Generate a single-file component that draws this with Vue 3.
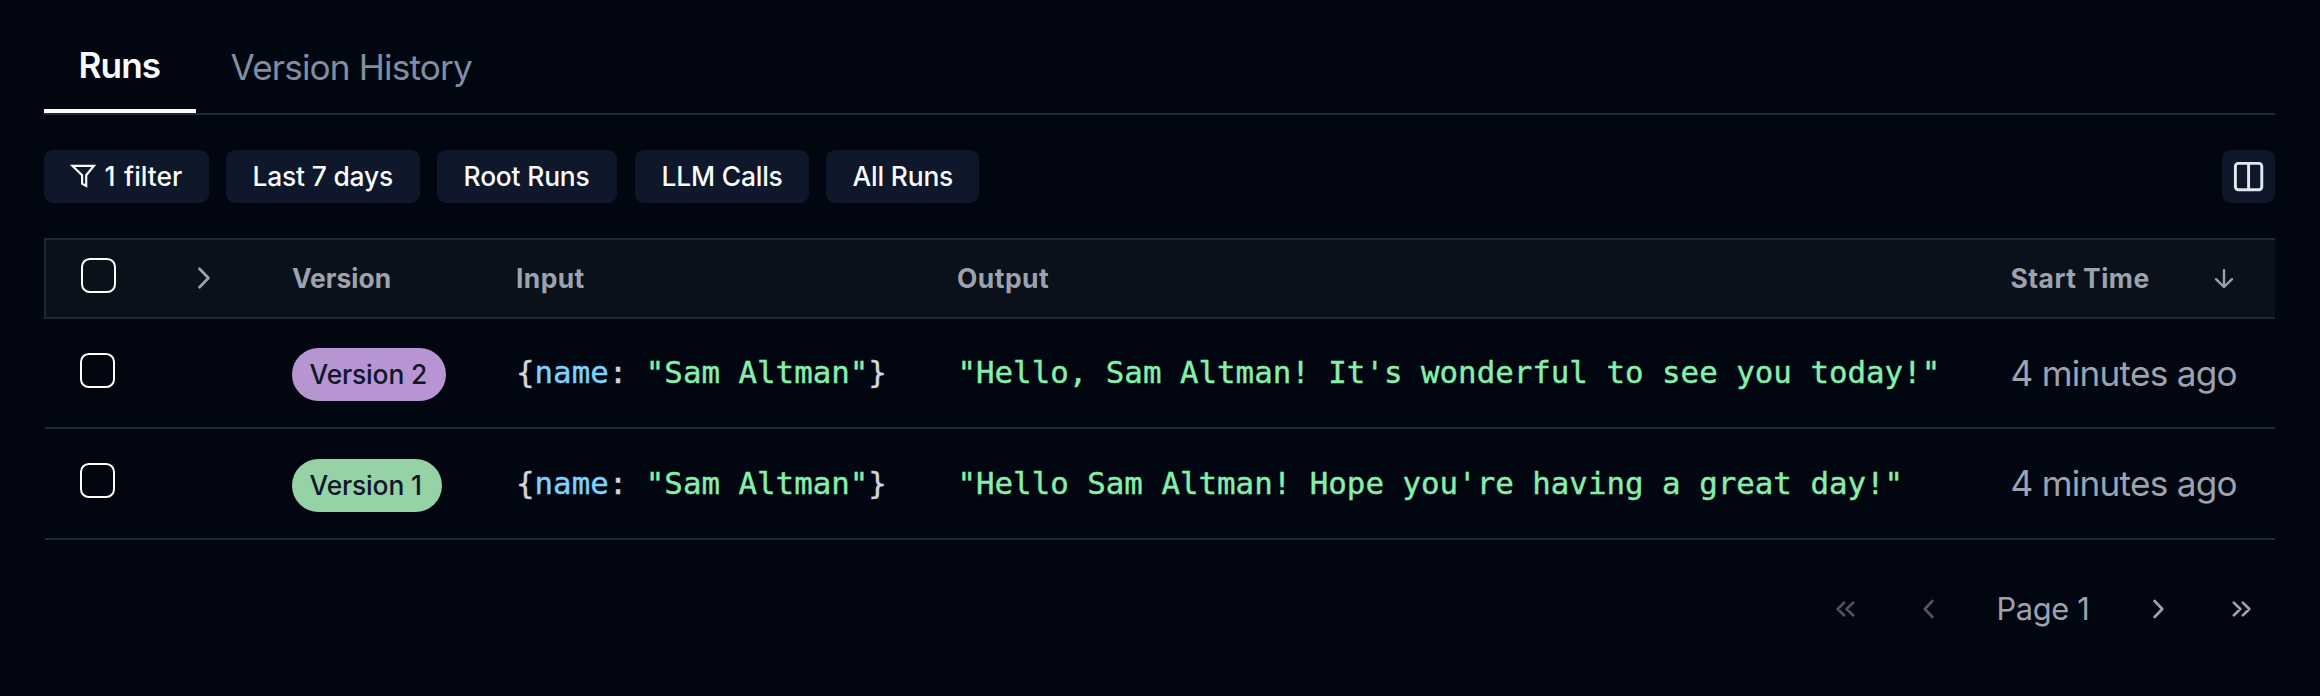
<script setup>
const tabs = [
  { label: 'Runs', active: true },
  { label: 'Version History', active: false },
]

const filters = [
  { label: '1 filter', cls: 'f-count', icon: true },
  { label: 'Last 7 days', cls: 'f-range' },
  { label: 'Root Runs', cls: 'f-root' },
  { label: 'LLM Calls', cls: 'f-llm' },
  { label: 'All Runs', cls: 'f-all' },
]

const runs = [
  {
    version: 'Version 2',
    tone: 'purple',
    name: '"Sam Altman"',
    output: '"Hello, Sam Altman! It\'s wonderful to see you today!"',
    time: '4 minutes ago',
  },
  {
    version: 'Version 1',
    tone: 'green',
    name: '"Sam Altman"',
    output: '"Hello Sam Altman! Hope you\'re having a great day!"',
    time: '4 minutes ago',
  },
]
</script>

<template>
  <main class="page">
    <nav class="tabs">
      <a v-for="t in tabs" :key="t.label" class="tab" :class="{ active: t.active }">{{ t.label }}</a>
    </nav>

    <div class="toolbar">
      <button v-for="f in filters" :key="f.label" class="chip" :class="f.cls">
        <svg v-if="f.icon" class="funnel" viewBox="0 0 26 26" width="26" height="26">
          <path d="M2.3 2.8H24L16.2 12.2V22.9L12.1 20.6V12.2Z" />
        </svg>
        <span>{{ f.label }}</span>
      </button>
      <button class="chip columns" aria-label="Columns">
        <svg viewBox="0 0 24 24" width="35.2" height="35.2">
          <rect x="3" y="3" width="18" height="18" rx="2" />
          <path d="M12 3v18" />
        </svg>
      </button>
    </div>

    <section class="table">
      <div class="row head">
        <div class="check"><span class="box"></span></div>
        <div class="expand">
          <svg viewBox="0 0 14 24" width="14" height="24"><path d="M2.5 2.7L11.4 12L2.5 21.3" /></svg>
        </div>
        <div class="h-version">Version</div>
        <div class="h-input">Input</div>
        <div class="h-output">Output</div>
        <div class="start">
          <span>Start Time</span>
          <svg viewBox="0 0 20 20" width="20" height="20"><path d="M10 1.3V18M2 10.2L10 18L18 10.2" /></svg>
        </div>
      </div>
      <div v-for="r in runs" :key="r.version" class="row body">
        <div class="check"><span class="box"></span></div>
        <div></div>
        <div><span class="badge" :class="r.tone">{{ r.version }}</span></div>
        <div class="code">{<span class="key">name</span>: <span class="str">{{ r.name }}</span>}</div>
        <div class="code str output">{{ r.output }}</div>
        <div class="time">{{ r.time }}</div>
      </div>
    </section>

    <footer class="pager">
      <svg class="dim first" viewBox="0 0 22 20" width="22" height="20">
        <path d="M10.2 3.6L3.7 10L10.2 16.4M19.2 3.6L12.7 10L19.2 16.4" />
      </svg>
      <svg class="dim prev" viewBox="0 0 14 20" width="14" height="20"><path d="M10.4 2L2.8 10L10.4 18" /></svg>
      <span class="pagenum">Page 1</span>
      <svg class="next" viewBox="0 0 14 20" width="14" height="20"><path d="M2.6 2L10.3 10L2.6 18" /></svg>
      <svg class="last" viewBox="0 0 22 20" width="22" height="20">
        <path d="M2.8 3.6L9.3 10L2.8 16.4M11.8 3.6L18.3 10L11.8 16.4" />
      </svg>
    </footer>
  </main>
</template>

<style>
body {
  background: #020610;
}
</style>

<style scoped>
.page {
  box-sizing: border-box;
  width: 2320px;
  height: 696px;
  padding: 19px 45px 0 44px;
  overflow: hidden;
  background: #020610;
  font-family: Inter, sans-serif;
  color: #9ca3af;
}

svg {
  display: block;
  flex: none;
  fill: none;
  stroke: currentColor;
  stroke-width: 2.7;
  stroke-linecap: round;
  stroke-linejoin: round;
}

.tabs {
  display: flex;
  height: 94px;
  border-bottom: 2px solid #1f2937;
}

.tab {
  box-sizing: border-box;
  height: 94px;
  padding: 1px 35px 0;
  line-height: 94px;
  font-size: 35.2px;
  font-weight: 430;
  letter-spacing: -0.86px;
  color: #7f8ea3;
  white-space: nowrap;
}

.tab.active {
  width: 152px;
  padding: 0 0 0 34.5px;
  margin-right: -0.5px;
  border-bottom: 4px solid #fff;
  line-height: 92px;
  font-weight: 600;
  letter-spacing: -0.9px;
  color: #f8fafc;
}

.toolbar {
  display: flex;
  height: 53px;
  margin-top: 35px;
}

.chip {
  box-sizing: border-box;
  display: flex;
  align-items: center;
  height: 53px;
  margin: 0 17px 0 0;
  padding: 0 0 1px 26.6px;
  border: 0;
  border-radius: 9px;
  background: #0f172a;
  color: #f8fafc;
  font: 500 26.4px Inter, sans-serif;
  letter-spacing: -0.2px;
  white-space: nowrap;
}

.f-count {
  width: 165px;
  padding-left: 26px;
  word-spacing: 1.5px;
  letter-spacing: 0;
}

.f-range {
  width: 194px;
}

.f-root {
  width: 180px;
  margin-right: 18px;
}

.f-llm {
  width: 174px;
}

.f-all {
  width: 153px;
}

.funnel {
  margin-right: 8.6px;
  stroke-width: 2.2;
  stroke-linejoin: miter;
}

.columns {
  width: 53px;
  margin: 0 0 0 auto;
  padding: 0 0 0 9px;
  color: #e2e8f0;
}

.columns svg {
  stroke-width: 2;
}

.table {
  margin-top: 35px;
}

.row {
  box-sizing: border-box;
  display: grid;
  align-items: center;
  white-space: nowrap;
}

.head {
  height: 81px;
  border: 2px solid #1f2937;
  border-right: 0;
  background: #0b111b;
  font-size: 26.4px;
  font-weight: 700;
  grid-template-columns: 151px 95px 224px 441px 1053.5px 1fr;
}

.head > div:not(.check) {
  padding-bottom: 1px;
}

.body {
  height: 110px;
  margin-left: 1px;
  border-bottom: 2px solid #1f2937;
  grid-template-columns: 151px 96px 224px 441px 1053.5px 1fr;
}

.body + .body {
  height: 111px;
}

.check {
  padding: 0 0 6px 35px;
}

.body .check {
  padding-bottom: 5px;
}

.body + .body .check {
  padding-bottom: 6px;
}

.box {
  display: block;
  box-sizing: border-box;
  width: 35px;
  height: 35px;
  border: 2px solid #fff;
  border-radius: 8.8px;
}

.h-input {
  letter-spacing: 0.4px;
}

.h-output {
  letter-spacing: 0.5px;
}

.start {
  display: flex;
  align-items: center;
  letter-spacing: 0.5px;
}

.start span {
  width: 203.5px;
}

.start svg {
  margin-top: 1px;
  stroke-width: 2.4;
}

.badge {
  display: block;
  box-sizing: border-box;
  width: 154px;
  height: 53px;
  margin-top: 3px;
  padding-left: 17.5px;
  border-radius: 27px;
  background: #b794d2;
  color: #0f172a;
  font-size: 26.4px;
  font-weight: 500;
  line-height: 52px;
  letter-spacing: -0.15px;
}

.badge.green {
  width: 150px;
  background: #95d2a6;
}

.code {
  padding-bottom: 2px;
  font-family: "DejaVu Sans Mono", monospace;
  font-size: 30.8px;
  color: #d1d5db;
  -webkit-text-stroke: 0.4px;
}

.output {
  padding-left: 0.5px;
}

.key {
  color: #7dd3fc;
}

.code.str,
.code .str {
  color: #86efac;
}

.time {
  padding-bottom: 1px;
  font-size: 35.2px;
  font-weight: 430;
  letter-spacing: -0.75px;
}

.pager {
  display: flex;
  align-items: center;
  height: 40px;
  margin-top: 48px;
  padding-left: 1790px;
}

.pager svg {
  margin-top: 1px;
}

.pager .dim {
  color: #50545e;
}

.pager .prev {
  margin-left: 66px;
}

.pagenum {
  width: 90px;
  margin: 1px 0 0 60.5px;
  font-size: 30.8px;
  font-weight: 430;
  letter-spacing: -0.36px;
  white-space: nowrap;
}

.pager .next {
  margin-left: 65px;
}

.pager .last {
  margin-left: 65.5px;
}
</style>
